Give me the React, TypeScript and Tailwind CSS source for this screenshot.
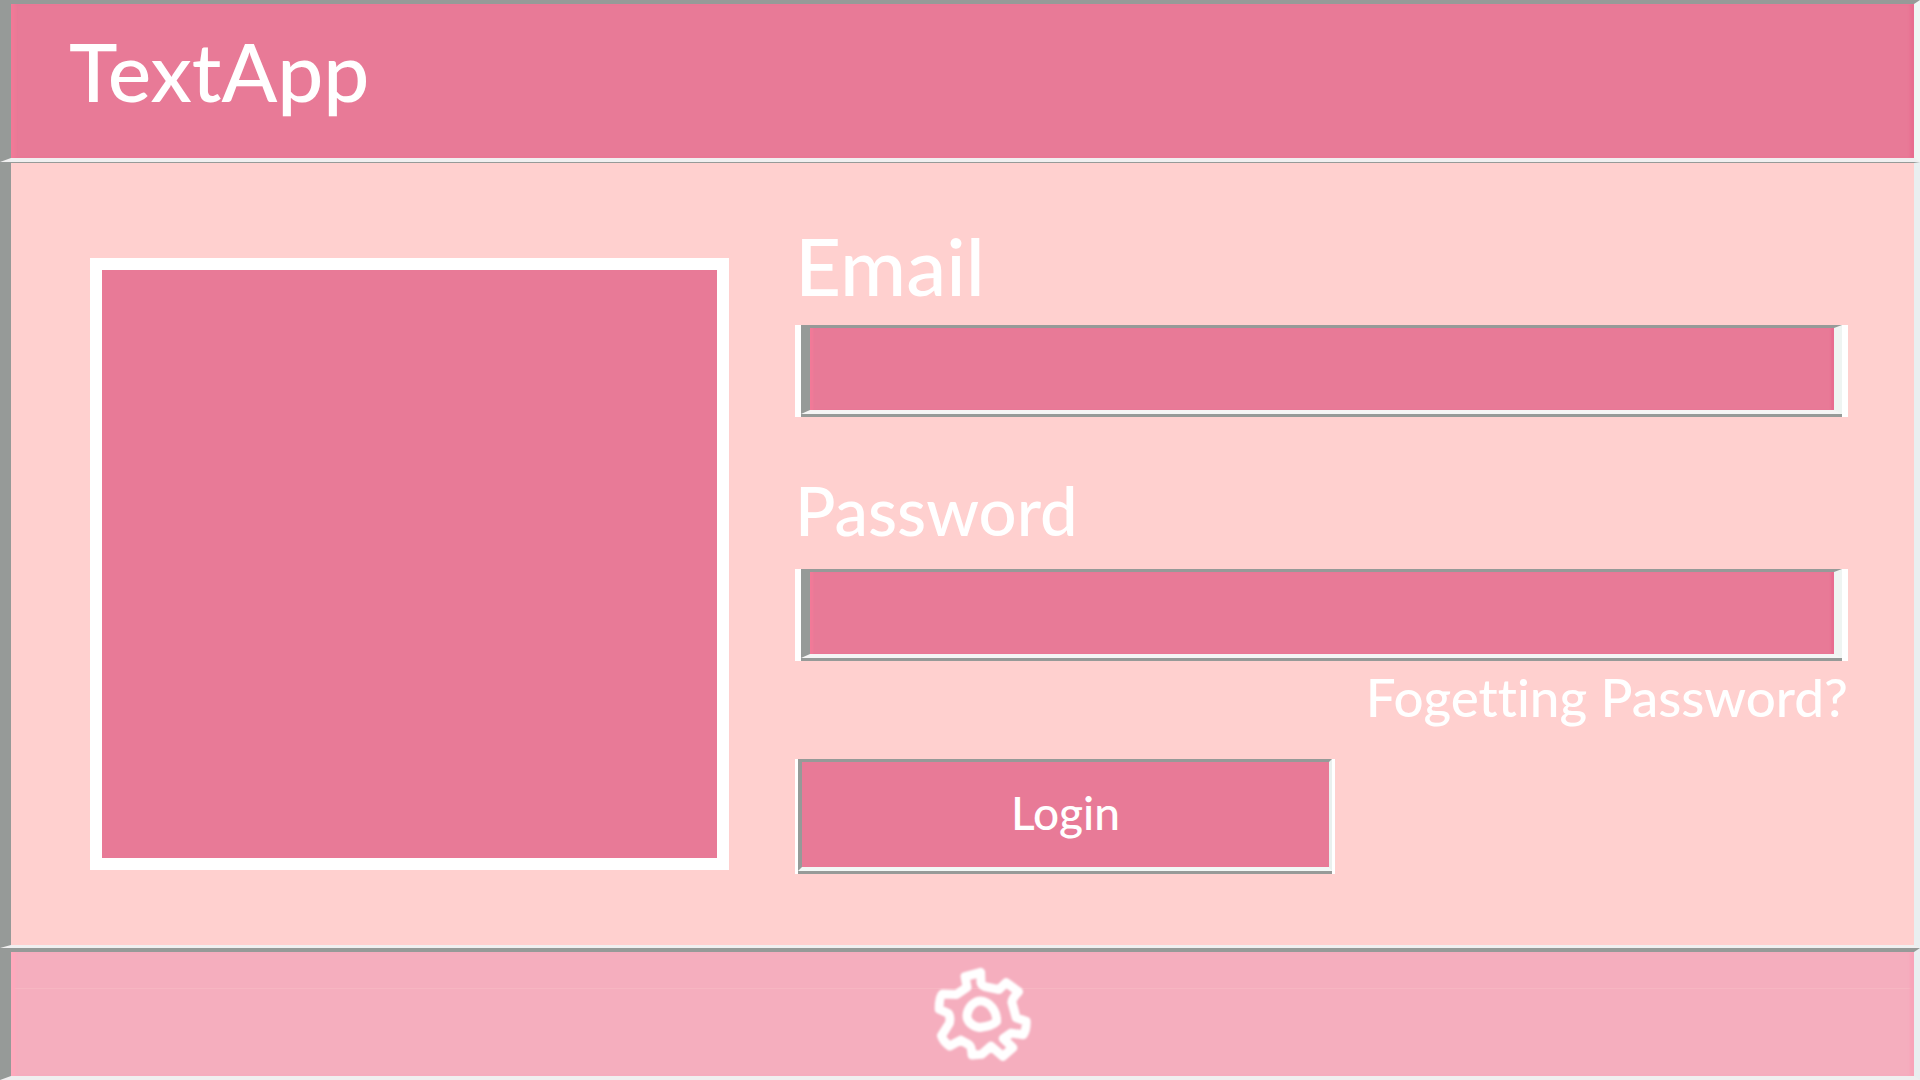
import React from 'react';

type FieldProps = { id: string; type: string };

function Field({ id, type }: FieldProps) {
  return (
    <div className="border-x-6 border-white">
      <div className="border-b-3 border-[#969a98]">
        <input
          id={id}
          name={id}
          type={type}
          className="block h-[89px] w-full border-t-3 border-r-8 border-b-4 border-l-9 border-t-[#969a98] border-r-[#eff4f2] border-b-[#f5f5f5] border-l-[#969a98] bg-[#e87a97] px-5 text-[46px] text-white shadow-[inset_4px_0_2px_-1px_#f27a98,inset_-4px_0_2px_-1px_#e86c90] outline-none"
        />
      </div>
    </div>
  );
}

function GearIcon() {
  return (
    <svg viewBox="100 105 300 295" className="h-[98px] w-[100px]" fill="none" aria-hidden="true">
      <defs>
        <filter id="soft" x="-10%" y="-10%" width="120%" height="120%">
          <feGaussianBlur stdDeviation="2.5" />
        </filter>
      </defs>
      <g stroke="#fff" strokeWidth="27" strokeLinecap="round" strokeLinejoin="round" filter="url(#soft)">
        <path d="M196 140 L243 127 L244 158 Q246 166 256 170 L298 179 L320 158 L357 185 Q338 205 337 217 L350 264 L380 274 Q381 300 371 315 L335 310 L311 326 L340 354 L310 380 L274 349 L246 374 L217 376 Q216 350 208 345 L183 331 L150 349 Q130 335 125 318 L149 280 Q153 262 146 251 L118 238 Q118 200 128 192 L170 194 L202 172 Z" />
        <path d="M243 213 C270 215 292 243 291 275 C280 288 260 290 240 293 C215 290 200 272 202 255 C205 230 225 213 243 213 Z" />
      </g>
    </svg>
  );
}

export default function App() {
  return (
    <div className="flex min-h-screen flex-col bg-[#ffd0cf] font-['Lato',sans-serif] font-medium text-white [font-variant-ligatures:none]">
      <header className="border-t-4 border-r-6 border-b-4 border-l-11 border-t-[#969a98] border-r-[#eff6f4] border-b-[#f0eff0] border-l-[#969a98] bg-[#e87a97] pt-[26px] pb-12 pl-[58px] shadow-[inset_5px_0_3px_-1px_#f27a98,inset_-5px_0_3px_-1px_#e86c90]">
        <h1 className="text-[82px] leading-[80px]">TextApp</h1>
      </header>

      <main className="flex-1 border-t border-r-6 border-b-3 border-l-11 border-t-[#969a98] border-r-[#e9eff0] border-b-[#f0eff0] border-l-[#969a98] pt-[62px] pr-[66px] pb-[70px] pl-[79px]">
        <div className="grid grid-cols-[639fr_1053fr] items-start gap-x-[66px]">
          <div className="mt-[33px] h-[612px] border-12 border-white bg-[#e87a97]" />

          <form className="flex flex-col" onSubmit={(e) => e.preventDefault()}>
            <label htmlFor="email" className="mb-5 self-start text-[80px] leading-[80px]">
              Email
            </label>
            <Field id="email" type="email" />

            <label htmlFor="password" className="mt-[60px] mb-[26px] self-start text-[67px] leading-[66px]">
              Password
            </label>
            <Field id="password" type="password" />

            <a href="#forgot" className="mt-[11px] self-end text-[53px] leading-[50px]">
              Fogetting Password?
            </a>

            <div className="mt-[37px] w-[540px] border-x-3 border-white">
              <div className="border-b-3 border-[#969a98]">
                <button
                  type="submit"
                  className="block h-28 w-full border-t-3 border-r-3 border-b-4 border-l-4 border-t-[#969a98] border-r-[#e9f0ee] border-b-[#f2f8f6] border-l-[#969a98] bg-[#e87a97] pb-1 text-[46px] leading-[46px]"
                >
                  Login
                </button>
              </div>
            </div>
          </form>
        </div>
      </main>

      <footer className="flex justify-center border-t-4 border-r-6 border-b-4 border-l-11 border-t-[#969a98] border-r-[#e9eff0] border-b-[#f0eff0] border-l-[#969a98] bg-[#f5aebe] bg-[linear-gradient(to_bottom,transparent_36px,#f7b6c2_36px,#f7b6c2_37px,transparent_37px)] pt-[13px] pb-[13px] pl-10 shadow-[inset_5px_0_3px_-1px_#ffaabd,inset_-5px_0_3px_-1px_#f8a4b9]">
        <button type="button" aria-label="Settings">
          <GearIcon />
        </button>
      </footer>
    </div>
  );
}
